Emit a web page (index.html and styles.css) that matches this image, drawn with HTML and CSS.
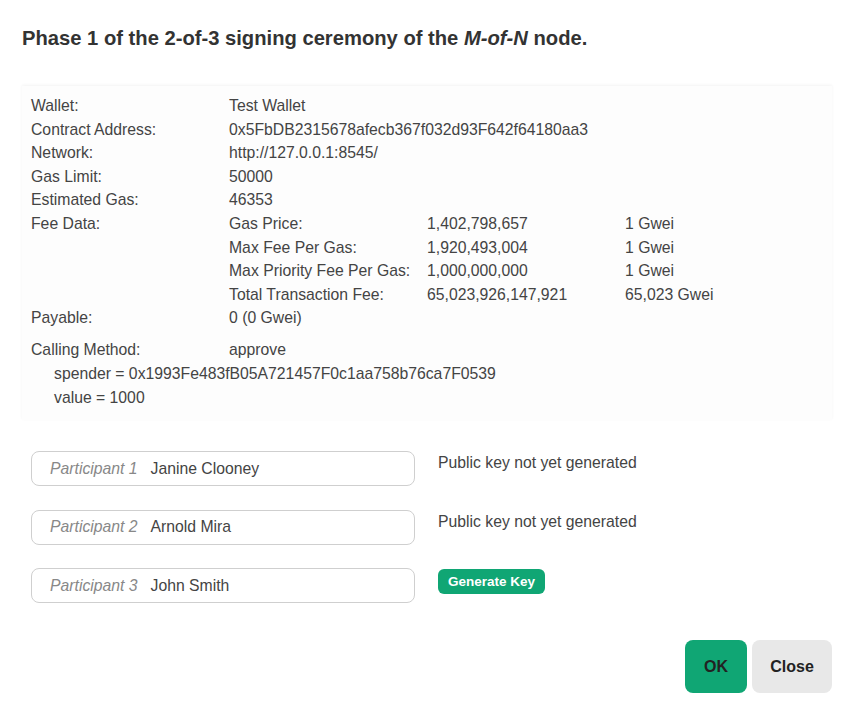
FILE: index.html
```html
<!DOCTYPE html>
<html>
<head>
<meta charset="utf-8">
<link rel="stylesheet" href="styles.css">
</head>
<body>
<div class="dialog">
  <h2 class="title">Phase 1 of the 2-of-3 signing ceremony of the <em>M-of-N</em> node.</h2>
  <div class="panel">
    <div class="info">
      <div class="lbl">Wallet:</div><div class="val">Test Wallet</div>
      <div class="lbl">Contract Address:</div><div class="val">0x5FbDB2315678afecb367f032d93F642f64180aa3</div>
      <div class="lbl">Network:</div><div class="val">http://127.0.0.1:8545/</div>
      <div class="lbl">Gas Limit:</div><div class="val">50000</div>
      <div class="lbl">Estimated Gas:</div><div class="val">46353</div>
      <div class="lbl">Fee Data:</div>
      <div class="fees">
        <div>Gas Price:</div><div>1,402,798,657</div><div>1 Gwei</div>
        <div>Max Fee Per Gas:</div><div>1,920,493,004</div><div>1 Gwei</div>
        <div>Max Priority Fee Per Gas:</div><div>1,000,000,000</div><div>1 Gwei</div>
        <div>Total Transaction Fee:</div><div>65,023,926,147,921</div><div>65,023 Gwei</div>
      </div>
      <div class="lbl">Payable:</div><div class="val">0 (0 Gwei)</div>
    </div>
    <div class="method">
      <div class="info">
        <div class="lbl">Calling Method:</div><div class="val">approve</div>
      </div>
      <div class="arg">spender = 0x1993Fe483fB05A721457F0c1aa758b76ca7F0539</div>
      <div class="arg">value = 1000</div>
    </div>
  </div>
  <div class="participants">
    <div class="prow">
      <div class="pinput"><span class="plabel">Participant 1</span><span class="pname">Janine Clooney</span></div>
      <div class="pstatus">Public key not yet generated</div>
    </div>
    <div class="prow">
      <div class="pinput"><span class="plabel">Participant 2</span><span class="pname">Arnold Mira</span></div>
      <div class="pstatus">Public key not yet generated</div>
    </div>
    <div class="prow">
      <div class="pinput"><span class="plabel">Participant 3</span><span class="pname">John Smith</span></div>
      <div class="pstatus"><button class="genkey">Generate Key</button></div>
    </div>
  </div>
  <div class="actions">
    <button class="btn ok">OK</button>
    <button class="btn close">Close</button>
  </div>
</div>
</body>
</html>
```
FILE: styles.css
```css
html, body {
  margin: 0;
  padding: 0;
  background: #fff;
}
body {
  font-family: "Liberation Sans", Arial, sans-serif;
  color: #444;
  font-size: 15.75px;
}
.dialog {
  width: 851px;
  height: 704px;
  box-sizing: border-box;
  padding: 26px 19px 0 22px;
  display: flex;
  flex-direction: column;
}
.title {
  margin: 0;
  font-size: 20.2px;
  line-height: 24px;
  font-weight: bold;
  color: #333;
}
.panel {
  margin-top: 36px;
  background: #fdfdfd;
  box-shadow: 0 -1px 3px rgba(0, 0, 0, 0.05);
  padding: 8px 9px 11px 9px;
  line-height: 23.6px;
}
.info {
  display: grid;
  grid-template-columns: 198px 1fr;
}
.fees {
  display: grid;
  grid-template-columns: 198px 198px 1fr;
}
.method {
  margin-top: 8.5px;
}
.arg {
  padding-left: 23px;
}
.participants {
  margin-top: 31px;
  padding-left: 9px;
  display: flex;
  flex-direction: column;
  gap: 23.5px;
}
.prow {
  display: flex;
  align-items: flex-start;
  gap: 23px;
}
.pinput {
  width: 384px;
  height: 35px;
  box-sizing: border-box;
  border: 1px solid #cfcfcf;
  border-radius: 8px;
  display: flex;
  align-items: center;
  padding-left: 18px;
}
.plabel {
  font-style: italic;
  color: #888;
  margin-right: 13px;
}
.pname {
  color: #444;
}
.pstatus {
  line-height: 23.6px;
}
.genkey {
  margin-top: 1px;
  background: #10a674;
  color: #fff;
  border: none;
  border-radius: 6px;
  height: 25px;
  padding: 0 10px;
  font-family: "Liberation Sans", Arial, sans-serif;
  font-weight: bold;
  font-size: 13.5px;
  display: block;
}
.actions {
  margin-top: 37px;
  display: flex;
  justify-content: flex-end;
  gap: 5px;
}
.btn {
  height: 53px;
  border: none;
  border-radius: 8px;
  font-family: "Liberation Sans", Arial, sans-serif;
  font-weight: bold;
  font-size: 16px;
  color: #222;
}
.ok {
  width: 62px;
  background: #10a674;
}
.close {
  width: 80px;
  background: #e8e8e8;
}
```
